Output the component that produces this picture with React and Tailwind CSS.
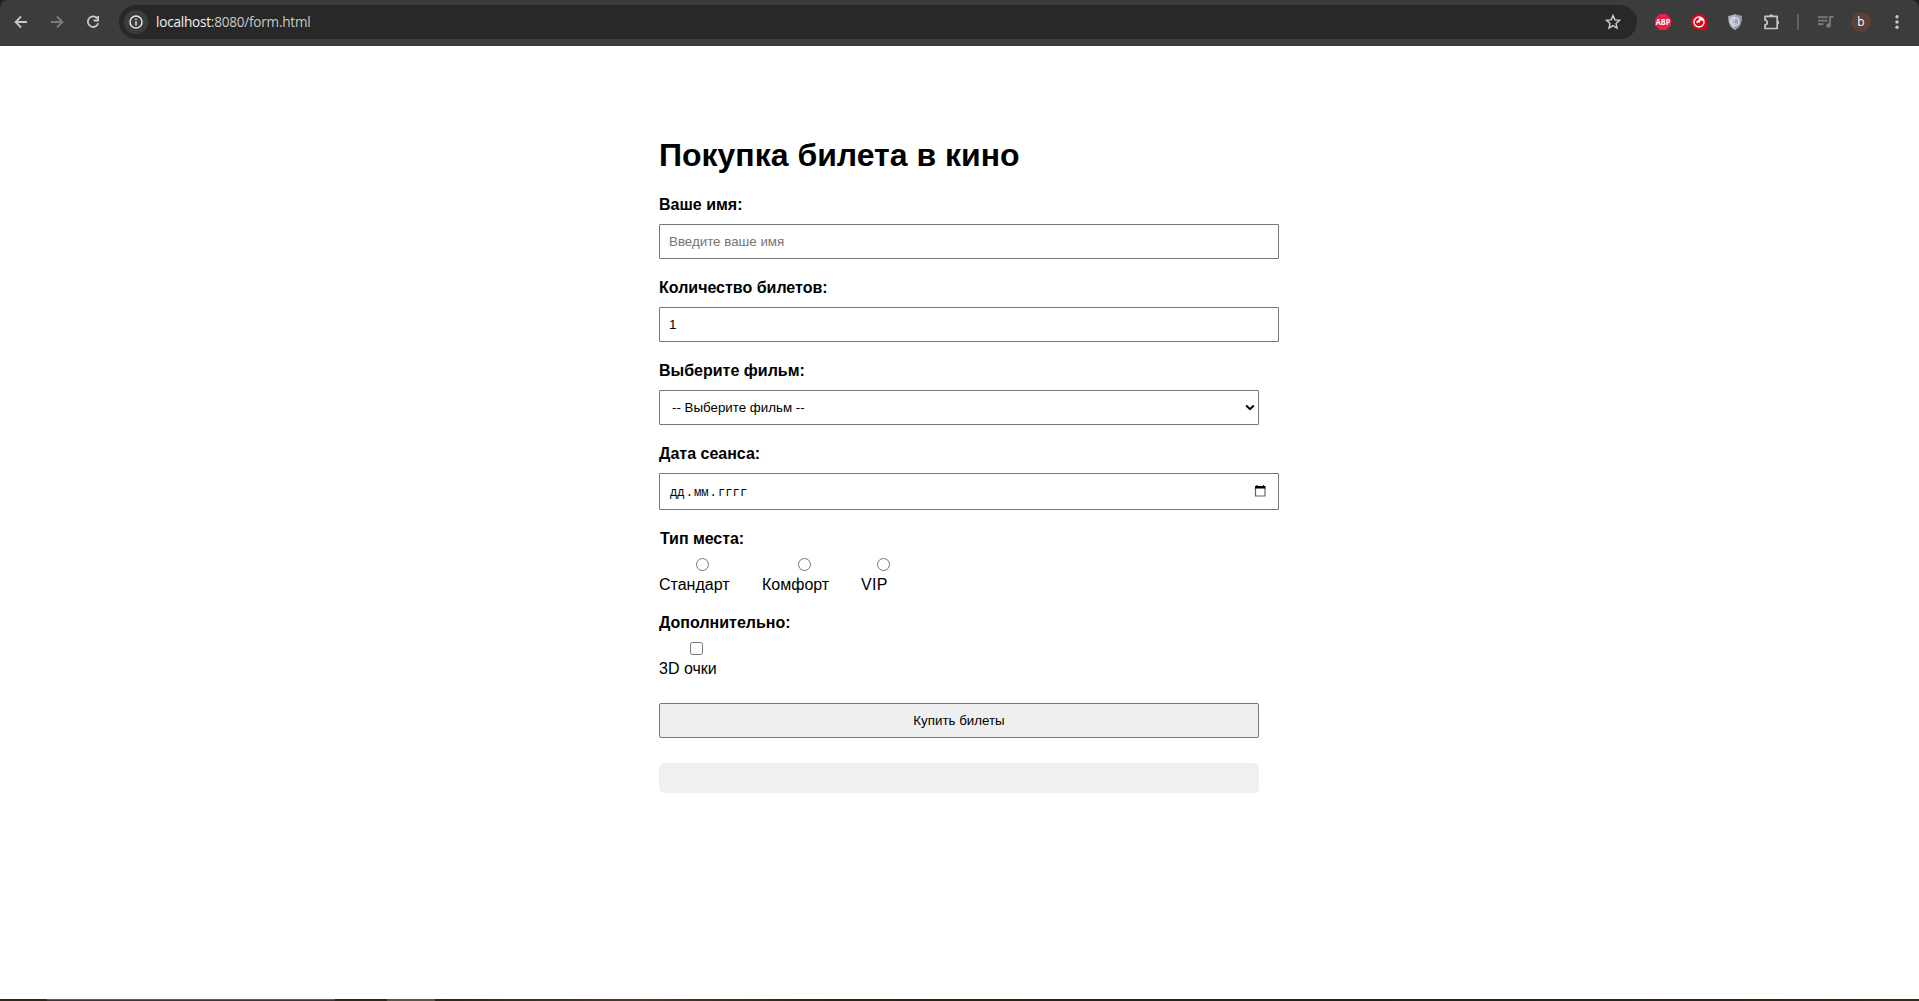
import React from "react";

const iconProps = { width: 18, height: 18, viewBox: "0 0 18 18", fill: "none" };

function BrowserBar() {
  return (
    <div className="bg-[#202020]">
      <header className="flex h-[46px] items-center rounded-t-lg bg-[#3c3c3c] pb-[2px]">
        <svg {...iconProps} className="ml-3 shrink-0" stroke="#c7c7c7" strokeWidth="1.8">
          <path d="M15 9H4M9 3.5 3.6 9 9 14.5" />
        </svg>
        <svg {...iconProps} className="ml-[18px] shrink-0" stroke="#7c7c7c" strokeWidth="1.8">
          <path d="M3 9h11M9 3.5 14.4 9 9 14.5" />
        </svg>
        <svg {...iconProps} className="ml-[18px] shrink-0" stroke="#c7c7c7" strokeWidth="1.8">
          <path d="M13.3 5.4A5.3 5.3 0 1 0 14.2 10.3M14.1 3v4.5H9.6" />
        </svg>
        <div className="ml-[17px] flex h-[34px] w-[1518px] items-center rounded-full bg-[#282828] pl-[5px] pr-[15px]">
          <span className="flex size-6 items-center justify-center rounded-full bg-[#3c3c3c]">
            <svg width="14" height="14" viewBox="0 0 14 14" fill="none" stroke="#e3e3e3" strokeWidth="1.5">
              <circle cx="7" cy="7" r="6" />
              <path d="M7 6.2v4.2M7 3.4v1.5" />
            </svg>
          </span>
          <span className="ml-2 whitespace-nowrap font-['Open_Sans',sans-serif] text-[13.6px] leading-5 tracking-[-0.24px] text-[#c7c7c7]">
            <span className="text-[#f2f2f2]">localhost</span>:8080/form.html
          </span>
          <svg className="ml-auto" width="18" height="18" viewBox="0 0 18 18" fill="none" stroke="#d0d0d0" strokeWidth="1.4">
            <path d="m9 2.6 1.9 4.3 4.6.4-3.5 3.1 1 4.6L9 12.6 5 15l1-4.6-3.5-3.1 4.6-.4z" />
          </svg>
        </div>
        <svg width="16" height="16" viewBox="0 0 16 16" className="ml-[18px] shrink-0">
          <path d="M4.7 0h6.6L16 4.7v6.6L11.3 16H4.7L0 11.3V4.7z" fill="#ed1e45" />
          <text x="8" y="11" textAnchor="middle" fill="#fff" fontFamily="Open Sans, sans-serif" fontWeight="700" fontSize="8.4" textLength="14.4" lengthAdjust="spacingAndGlyphs">ABP</text>
        </svg>
        <svg width="16" height="16" viewBox="0 0 16 16" fill="none" className="ml-5 shrink-0">
          <path d="M8 0a8 8 0 0 1 8 8v8H8A8 8 0 0 1 8 0Z" fill="#da0615" />
          <circle cx="8" cy="8" r="5" stroke="#fff" strokeWidth="1.4" />
          <path d="M8.500 3.200A5 5 0 0 1 12.600 6.800L9.200 6.600 9 8.600 7.200 8.400 5.600 9.400 5.400 7.200 7.400 6Z" fill="#fff" />
        </svg>
        <svg width="14" height="16" viewBox="0 0 14 16" fill="none" className="ml-[21px] shrink-0">
          <path d="M7 0c2 1.3 4.2 1.7 6.7 1.8C14 8 12.4 13.300 7 16 1.600 13.300 0 8 .3 1.800 2.800 1.700 5 1.300 7 0Z" fill="#b0b6c3" />
          <path d="M7 0c2 1.300 4.200 1.700 6.700 1.800C14 8 12.400 13.300 7 16Z" fill="#929aab" />
          <circle cx="7" cy="7.600" r="4" stroke="#e0e5ef" strokeWidth="1.300" />
          <path d="M8.800 6.400a2.200 2.200 0 1 0 0 2.400" stroke="#c9d4e9" />
        </svg>
        <svg {...iconProps} className="ml-[21px] shrink-0" stroke="#c7c7c7" strokeWidth="1.700">
          <path d="M2 3.300h12.200v12.200H2v-3.600c3-.3 3-4.600 0-4.900z" strokeLinejoin="round" />
          <path d="M6.200 3.300a2 2 0 0 1 4 0zM14.200 7.400a2 2 0 0 1 0 4z" fill="#c7c7c7" stroke="none" />
        </svg>
        <span className="ml-4 h-4 w-[2px] shrink-0 bg-[#606060]" />
        <svg width="18" height="16" viewBox="0 0 18 16" fill="none" className="ml-[18px] shrink-0" stroke="#7c7c7c" strokeWidth="1.700">
          <path d="M1 3.200h9.500M1 6.700h9.500M1 10.200h5.500M13 12V2.900h3.500" />
          <circle cx="11.500" cy="11.500" r="2.300" fill="#7c7c7c" stroke="none" />
        </svg>
        <span className="ml-4 flex size-5 shrink-0 items-center justify-center rounded-full bg-[#5d4037] pb-px font-['Open_Sans',sans-serif] text-xs text-white">b</span>
        <svg width="18" height="18" viewBox="0 0 18 18" className="ml-[17px] shrink-0" fill="#c7c7c7">
          <circle cx="9" cy="3.800" r="1.700" /><circle cx="9" cy="9" r="1.700" /><circle cx="9" cy="14.200" r="1.700" />
        </svg>
      </header>
    </div>
  );
}

const control = "block rounded-[1px] border border-[#767676] bg-white px-[9px] text-[13.333px]";
const label = "block h-[18px] text-base leading-[18px] font-bold";

export default function App() {
  return (
    <div className="flex h-[1001px] flex-col overflow-hidden bg-white font-['Liberation_Sans',Arial,sans-serif] text-black">
      <BrowserBar />
      <main className="flex-1 pt-[91px] pl-[659px]">
        <h1 className="h-[37px] text-[32px] leading-[37px] font-bold">Покупка билета в кино</h1>
        <form className="mt-[22px] w-[600px]">
          <label className={label} htmlFor="name">Ваше имя:</label>
          <input id="name" className={control + " mt-2.5 h-[35px] w-[620px] placeholder:text-[#757575]"} placeholder="Введите ваше имя" />

          <label className={label + " mt-5"} htmlFor="count">Количество билетов:</label>
          <input id="count" className={control + " mt-2.5 h-[35px] w-[620px]"} defaultValue="1" />

          <label className={label + " mt-5"}>Выберите фильм:</label>
          <div className={control + " mt-2.5 flex h-[35px] w-[600px] items-center justify-between pr-[3px] pl-[12px]"}>
            <span>-- Выберите фильм --</span>
            <svg width="10" height="8" viewBox="0 0 10 8" fill="none" stroke="#000" strokeWidth="2">
              <path d="m1.200 1.500 3.800 3.700 3.800-3.700" />
            </svg>
          </div>

          <label className={label + " mt-5"}>Дата сеанса:</label>
          <div className={control + " mt-2.5 flex h-[37px] w-[620px] items-center justify-between pr-[12px]"}>
            <span className="flex gap-px pt-[2px] pl-px font-['Liberation_Mono',monospace] text-[12.2px] leading-4">
              <span>дд</span><span>.</span><span>мм</span><span>.</span><span>гггг</span>
            </span>
            <svg width="12" height="12" viewBox="0 0 12 12" className="mb-px">
              <path d="M1.500 3v8h9.500V3" fill="none" stroke="#666" strokeWidth="1.200" />
              <path d="M1 1h1.500V0h1v1H9V0h1v1h1.500v2.500H1z" />
            </svg>
          </div>

          <div className={label + " mt-5 pl-px tracking-[-0.05px]"}>Тип места:</div>
          <div className="mt-2.5 flex text-base leading-[18px]">
            <label className="w-[103px]">
              <input type="radio" name="seat" className="ml-[37.400px] block size-[13px]" />
              <span className="mt-[5px] block">Стандарт</span>
            </label>
            <label className="w-[99px]">
              <input type="radio" name="seat" className="ml-[36px] block size-[13px]" />
              <span className="mt-[5px] block">Комфорт</span>
            </label>
            <label>
              <input type="radio" name="seat" className="ml-[16px] block size-[13px]" />
              <span className="mt-[5px] block tracking-[0.300px]">VIP</span>
            </label>
          </div>

          <div className={label + " mt-5"}>Дополнительно:</div>
          <label className="mt-2.5 block text-base leading-[18px]">
            <input type="checkbox" className="ml-[31px] block size-[13px]" />
            <span className="mt-[5px] block">3D очки</span>
          </label>

          <button type="button" className="mt-[25px] block h-[35px] w-[600px] rounded-[2px] border border-[#767676] bg-[#efefef] text-[13.333px]">Купить билеты</button>
          <div className="mt-[25px] h-[30px] rounded-[5px] bg-[#f0f0f0]" />
        </form>
      </main>
      <footer className="flex h-[2px] shrink-0 bg-[#2e2819]">
        <span className="ml-[47px] w-[288px] border-t border-[#625c5c] bg-[#3c3535]" />
        <span className="ml-[52px] w-[48px] bg-[#5c5447]" />
        <span className="w-[400px] bg-linear-to-r from-[#2e2617] via-[#473a2f] to-[#2c2218]" />
        <span className="flex-1 bg-linear-to-r from-[#2c2218] via-[#202317] to-[#33291f]" />
      </footer>
    </div>
  );
}
